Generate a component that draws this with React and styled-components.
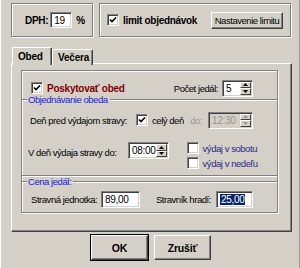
import React from "react";
import styled, { createGlobalStyle } from "styled-components";

const Global = createGlobalStyle`
  html, body { margin: 0; padding: 0; background: #d4d0c8; }
  body {
    font-family: "Liberation Sans", Arial, sans-serif;
    font-size: 9.5px;
    letter-spacing: -0.45px;
    color: #000;
    white-space: nowrap;
  }
`;

const Dialog = styled.div`
  width: 300px;
  height: 268px;
  box-sizing: border-box;
  padding: 3px 0 0 10px;
  display: flex;
  flex-direction: column;
  border-left: 1px solid #fff;
  border-right: 1px solid #a09c94;
`;

const TopRow = styled.div`
  display: flex;
  gap: 6px;
  height: 34px;
`;

const Etched = styled.div`
  box-sizing: border-box;
  border: 1px solid #808080;
  box-shadow: inset 1px 1px 0 #fff, 1px 1px 0 #fff;
  display: flex;
  align-items: center;
`;

const DphPanel = styled(Etched)`
  width: 82px;
  padding-left: 13px;
`;

const LimitPanel = styled(Etched)`
  width: 192px;
  padding: 0 7px 0 7px;
`;

const Bold = styled.span`
  font-weight: bold;
  font-size: 10px;
  letter-spacing: -0.3px;
  margin: ${(p) => p.$m || "0"};
`;

const Field = styled.div`
  box-sizing: border-box;
  width: ${(p) => p.$w}px;
  height: ${(p) => p.$h || 17}px;
  background: ${(p) => (p.$disabled ? "#d4d0c8" : "#fff")};
  color: ${(p) => (p.$disabled ? "#9a978f" : "#000")};
  border-top: 1px solid #808080;
  border-left: 1px solid #808080;
  border-right: 1px solid #fff;
  border-bottom: 1px solid #fff;
  box-shadow: inset 1px 1px 0 #404040, inset -1px -1px 0 #d4d0c8;
  display: flex;
  align-items: center;
  padding-left: 3px;
  font-size: 10px;
  letter-spacing: -0.3px;
`;

const Value = styled.span`
  flex: 1;
`;

const Selected = styled.span`
  background: #0a246a;
  color: #fff;
  padding: 0 1px;
`;

const SpinCol = styled.div`
  display: flex;
  flex-direction: column;
  align-self: stretch;
  margin: 1px 1px 1px 0;
`;

const SpinBtn = styled.div`
  flex: 1;
  width: 11px;
  box-sizing: border-box;
  background: #d4d0c8;
  border-top: 1px solid #fff;
  border-left: 1px solid #fff;
  border-right: 1px solid #404040;
  border-bottom: 1px solid #404040;
  display: flex;
  align-items: center;
  justify-content: center;
`;

const Arrow = ({ up, disabled }) => (
  <svg width="5" height="3" viewBox="0 0 5 3">
    <polygon
      points={up ? "0,3 5,3 2.5,0" : "0,0 5,0 2.5,3"}
      fill={disabled ? "#9a978f" : "#000"}
    />
  </svg>
);

const Spinner = ({ w, value, disabled }) => (
  <Field $w={w} $disabled={disabled}>
    <Value>{value}</Value>
    <SpinCol>
      <SpinBtn>
        <Arrow up disabled={disabled} />
      </SpinBtn>
      <SpinBtn>
        <Arrow disabled={disabled} />
      </SpinBtn>
    </SpinCol>
  </Field>
);

const Box = styled.span`
  box-sizing: border-box;
  width: 12px;
  height: 12px;
  flex: none;
  background: #fff;
  border-top: 1px solid #808080;
  border-left: 1px solid #808080;
  border-right: 1px solid #fff;
  border-bottom: 1px solid #fff;
  box-shadow: inset 1px 1px 0 #404040, inset -1px -1px 0 #d4d0c8;
  display: inline-flex;
  align-items: center;
  justify-content: center;
`;

const Check = ({ on }) => (
  <Box>
    {on && (
      <svg width="8" height="8" viewBox="0 0 8 8">
        <polyline points="1,3.5 3,5.5 7,1.5" fill="none" stroke="#000" strokeWidth="1.6" />
      </svg>
    )}
  </Box>
);

const CheckRow = styled.label`
  display: flex;
  align-items: center;
  gap: ${(p) => p.$gap || 4}px;
  color: ${(p) => p.$color || "#000"};
`;

const Button = styled.div`
  box-sizing: border-box;
  width: ${(p) => p.$w}px;
  height: ${(p) => p.$h}px;
  background: #d4d0c8;
  border-top: 1px solid #fff;
  border-left: 1px solid #fff;
  border-right: 1px solid #404040;
  border-bottom: 1px solid #404040;
  box-shadow: inset -1px -1px 0 #808080;
  outline: ${(p) => (p.$default ? "1px solid #000" : "none")};
  outline-offset: 0;
  display: flex;
  align-items: center;
  justify-content: center;
  font-weight: ${(p) => (p.$bold ? "bold" : "normal")};
  font-size: ${(p) => (p.$bold ? 10.5 : 9.5)}px;
  letter-spacing: ${(p) => (p.$bold ? -0.2 : -0.45)}px;
`;

const LimitButton = styled(Button)`
  margin-left: auto;
`;

const Tabs = styled.div`
  display: flex;
  margin-top: 10px;
  margin-left: 1px;
  height: 17px;
  position: relative;
  z-index: 1;
`;

const Tab = styled.div`
  box-sizing: border-box;
  width: ${(p) => p.$w}px;
  height: ${(p) => (p.$active ? 18 : 16)}px;
  margin-top: ${(p) => (p.$active ? 0 : 2)}px;
  background: #d4d0c8;
  border-top: 1px solid #fff;
  border-left: 1px solid #fff;
  border-right: 1px solid #404040;
  box-shadow: inset -1px 0 0 #808080;
  border-radius: 2px 2px 0 0;
  font-weight: bold;
  font-size: 10px;
  letter-spacing: -0.2px;
  padding-left: 5px;
  display: flex;
  align-items: center;
`;

const Pane = styled.div`
  box-sizing: border-box;
  width: 281px;
  height: 169px;
  margin-top: -1px;
  border-top: 1px solid #fff;
  border-left: 1px solid #fff;
  border-right: 1px solid #404040;
  border-bottom: 1px solid #404040;
  box-shadow: inset -1px -1px 0 #808080;
  padding: 6px 13px 0 9px;
`;

const Group = styled.div`
  box-sizing: border-box;
  width: 257px;
  border: 1px solid #808080;
  box-shadow: inset 1px 1px 0 #fff, 1px 1px 0 #fff;
  padding-top: 8px;
  padding-bottom: 4px;
`;

const Row = styled.div`
  display: flex;
  align-items: ${(p) => p.$align || "center"};
  height: ${(p) => p.$h}px;
  margin-top: ${(p) => p.$mt || 0}px;
  padding: 0 24px 0 ${(p) => p.$pl || 8}px;
`;

const Provide = styled.span`
  color: #800000;
  font-weight: bold;
  font-size: 10px;
  letter-spacing: -0.25px;
`;

const Label = styled.span`
  width: ${(p) => (p.$w ? `${p.$w}px` : "auto")};
  flex: none;
  margin: ${(p) => p.$m || "0"};
  color: ${(p) => (p.$disabled ? "#9a978f" : "#000")};
`;

const Section = styled.div`
  margin-top: ${(p) => p.$mt || 0}px;
  padding-bottom: ${(p) => p.$pb || 0}px;
  border-bottom: ${(p) => (p.$bottom ? "1px solid #808080" : "none")};
  box-shadow: ${(p) => (p.$bottom ? "0 1px 0 #fff" : "none")};
`;

const Legend = styled.div`
  display: flex;
  align-items: center;
  height: 11px;
  color: #1c1ce0;
  &::before {
    content: "";
    width: 5px;
    border-top: 1px solid #808080;
    border-bottom: 1px solid #fff;
    margin-right: 1px;
  }
  &::after {
    content: "";
    flex: 1;
    border-top: 1px solid #808080;
    border-bottom: 1px solid #fff;
    margin-left: 2px;
  }
`;

const DayChecks = styled.div`
  display: flex;
  flex-direction: column;
  gap: 3px;
  margin-left: 18px;
`;

const Buttons = styled.div`
  display: flex;
  gap: 6px;
  margin: 3px 0 0 80px;
`;

export default function App() {
  return (
    <Dialog>
      <Global />
      <TopRow>
        <DphPanel>
          <Bold $m="0 2px 0 0">DPH:</Bold>
          <Field $w={22} $h={16}>19</Field>
          <Bold $m="0 0 0 4px">%</Bold>
        </DphPanel>
        <LimitPanel>
          <CheckRow>
            <Check on />
            <Bold>limit objednávok</Bold>
          </CheckRow>
          <LimitButton $w={72} $h={17}>Nastavenie limitu</LimitButton>
        </LimitPanel>
      </TopRow>
      <Tabs>
        <Tab $w={40} $active>Obed</Tab>
        <Tab $w={41}>Večera</Tab>
      </Tabs>
      <Pane>
        <Group>
          <Row $h={18} $pl={9}>
            <CheckRow $gap={4}>
              <Check on />
              <Provide>Poskytovať obed</Provide>
            </CheckRow>
            <Label $m="0 4px 0 auto">Počet jedál:</Label>
            <Spinner w={31} value="5" />
          </Row>
          <Section $mt={-3} $pb={6} $bottom>
            <Legend>Objednávanie obeda</Legend>
            <Row $h={16} $mt={7}>
              <Label $w={106}>Deň pred výdajom stravy:</Label>
              <CheckRow>
                <Check on />
                celý deň
              </CheckRow>
              <Label $m="0 6px 0 auto" $disabled>do:</Label>
              <Spinner w={45} value="12:30" disabled />
            </Row>
            <Row $h={27} $mt={14} $pl={6} $align="flex-start">
              <Label $w={100} $m="5px 0 0 0">V deň výdaja stravy do:</Label>
              <Spinner w={43} value="08:00" />
              <DayChecks>
                <CheckRow $color="#2a2a8a">
                  <Check />
                  výdaj v sobotu
                </CheckRow>
                <CheckRow $color="#2a2a8a">
                  <Check />
                  výdaj v nedeľu
                </CheckRow>
              </DayChecks>
            </Row>
          </Section>
          <Section>
            <Legend>Cena jedál:</Legend>
            <Row $h={17} $mt={4} $pl={9}>
              <Label $w={70}>Stravná jednotka:</Label>
              <Field $w={41}>89,00</Field>
              <Label $m="0 5px 0 16px">Stravník hradí:</Label>
              <Field $w={39}>
                <Selected>25,00</Selected>
              </Field>
            </Row>
          </Section>
        </Group>
      </Pane>
      <Buttons>
        <Button $w={57} $h={25} $bold $default>OK</Button>
        <Button $w={57} $h={25} $bold>Zrušiť</Button>
      </Buttons>
    </Dialog>
  );
}
